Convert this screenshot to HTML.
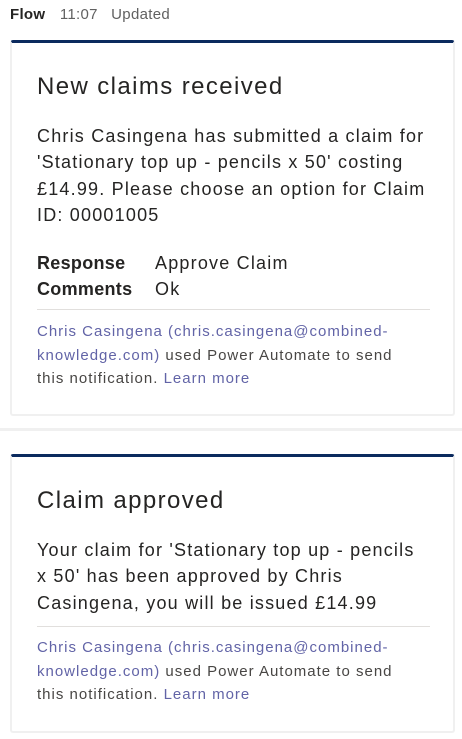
<!DOCTYPE html>
<html><head><style>
body{margin:0;width:462px;height:739px;background:#fff;font-family:"Liberation Sans",sans-serif;color:#252423;position:relative;overflow:hidden}
.hdr{position:absolute;left:10px;top:6px;font-size:15px;color:#616161;letter-spacing:0.3px}
.hdr b{color:#252423;font-weight:bold;margin-right:10px}
.card{position:absolute;left:10px;width:441px;border:2px solid #f0f0f0;border-top:3px solid #0b2a5e;border-radius:3px;background:#fff}
.t{position:absolute;left:25px;font-size:24px;color:#252423;white-space:nowrap;letter-spacing:1.4px}
.p{position:absolute;left:25px;font-size:18px;line-height:26.3px;white-space:nowrap;letter-spacing:1.2px}
.f{position:absolute;left:25px;font-size:15px;line-height:23.5px;white-space:nowrap;color:#484644;letter-spacing:1px}
.f a{color:#6264a7;text-decoration:none}
.hr{position:absolute;left:25px;width:393px;height:1px;background:#e1dfdd}
.sep{position:absolute;left:0;width:462px;height:3px;background:#f0f0f0;top:428px}
</style></head><body>
<div class="hdr"><b>Flow</b> 11:07&nbsp;&nbsp; Updated</div>
<div class="card" style="top:40px;height:371px">
 <div class="t" style="top:30px">New claims received</div>
 <div class="p" style="top:80px">Chris Casingena has submitted a claim for<br>'Stationary top up - pencils x 50' costing<br>£14.99. Please choose an option for Claim<br>ID: 00001005</div>
 <div class="p" style="top:207px"><b style="display:inline-block;width:118px;letter-spacing:0.3px">Response</b>Approve Claim<br><b style="display:inline-block;width:118px;letter-spacing:0.3px">Comments</b>Ok</div>
 <div class="hr" style="top:266px"></div>
 <div class="f" style="top:277px"><a>Chris Casingena (chris.casingena@combined-<br>knowledge.com)</a> used Power Automate to send<br>this notification. <a>Learn more</a></div>
</div>
<div class="sep"></div>
<div class="card" style="top:454px;height:274px">
 <div class="t" style="top:30px">Claim approved</div>
 <div class="p" style="top:80px">Your claim for 'Stationary top up - pencils<br>x 50' has been approved by Chris<br>Casingena, you will be issued £14.99</div>
 <div class="hr" style="top:169px"></div>
 <div class="f" style="top:179px"><a>Chris Casingena (chris.casingena@combined-<br>knowledge.com)</a> used Power Automate to send<br>this notification. <a>Learn more</a></div>
</div>
</body></html>
